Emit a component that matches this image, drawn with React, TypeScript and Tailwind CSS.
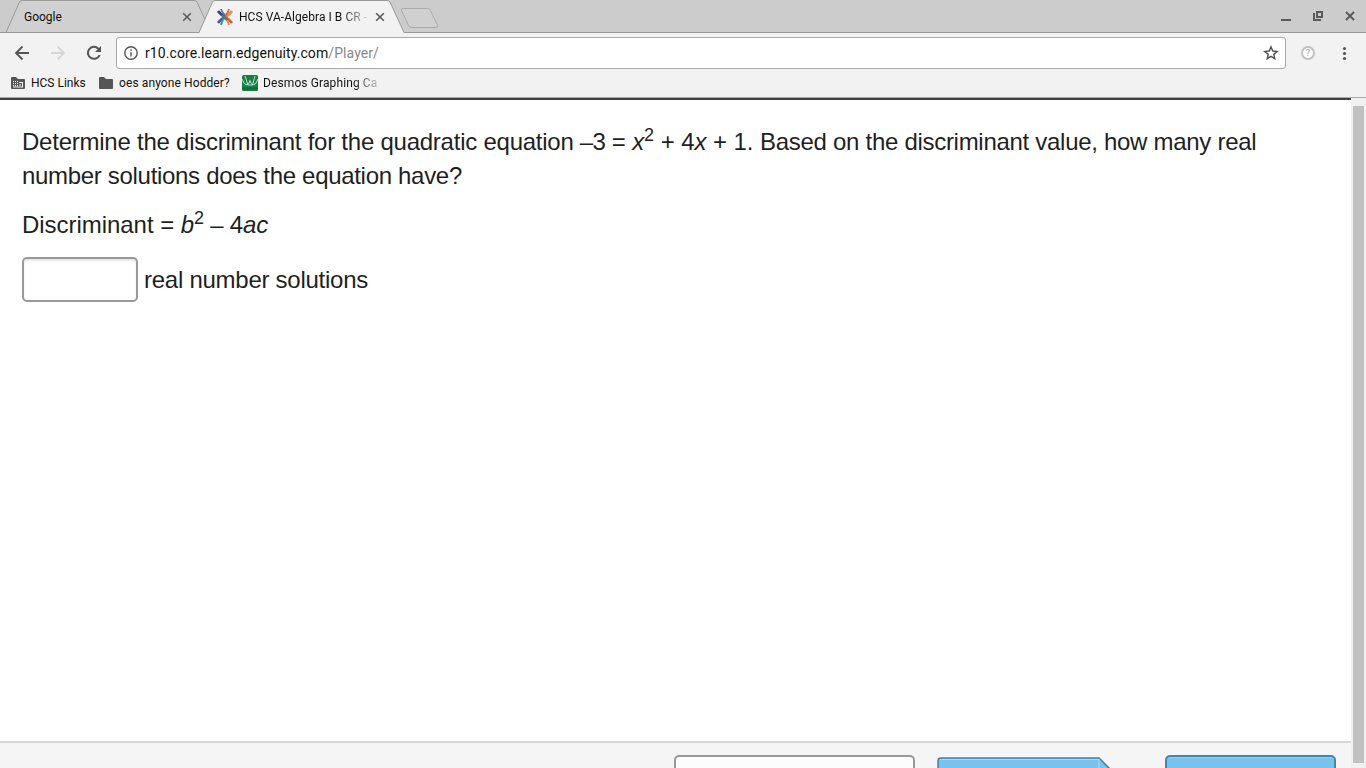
import React from 'react';

const CloseIcon = ({ className }: { className: string }) => (
  <svg className={className} viewBox="0 0 10 10" fill="none" stroke="#5a5a5a" strokeWidth="1.6">
    <path d="M1.200 1.200l7.600 7.600M8.800 1.200L1.200 8.800" />
  </svg>
);

const TabStrip: React.FC = () => (
  <div className="relative flex h-[33px] shrink-0 bg-[#cccccc] text-[12px] text-[#111]">
    {/* tab outlines */}
    <svg className="absolute inset-0 h-[33px] w-[1366px]" viewBox="0 0 1366 33" fill="none">
      <path d="M6 32.500L19.500 2Q20.500 .5 22 .5H194Q196 .5 197 2L211 32.500Z" fill="#d0d0d0" stroke="#999" />
      <path d="M0 32.500H199M404 32.500H1366" stroke="#999" />
      <path d="M199 33L212.500 2Q213.500 .5 215 .5H387Q389 .5 390 2L404 32.500V33Z" fill="#f2f2f2" />
      <path d="M199 32.500L212.500 2Q213.500 .5 215 .5H387Q389 .5 390 2L404 32.500" stroke="#999" />
      <path d="M403 8.500H427.500Q429.500 8.500 430.500 10.500L437.500 25.500Q438 27.500 436 27.500H412Q409.500 27.500 408.500 25.500L401.500 10.500Q401 8.500 403 8.500Z" fill="#d0d0d0" stroke="#aaa" />
    </svg>
    <div className="relative flex h-8 w-[205px] items-center pt-[2px] pl-6">
      <span className="w-[158px]">Google</span>
      <CloseIcon className="h-[10px] w-[10px]" />
    </div>
    <div className="relative flex h-8 w-[196px] items-center pt-[2px] pl-3">
      <svg className="mr-[6px] h-4 w-4" viewBox="0 0 16 16" fill="none" strokeWidth="2.700">
        <path d="M1 2Q4 6 8 7.500" stroke="#35417c" />
        <path d="M4 0Q5 4 8 6" stroke="#4a78ad" strokeWidth="1.800" />
        <path d="M15 2Q12 6 8 8" stroke="#f08a3b" />
        <path d="M12 0Q11 4 8 7" stroke="#e7643a" strokeWidth="1.800" />
        <path d="M8 8Q4 10 1 14" stroke="#48529b" />
        <path d="M8 8Q5 11 4 16" stroke="#2f9d9f" strokeWidth="2" />
        <path d="M8 8Q12 10 15 14" stroke="#df573b" />
        <path d="M8 9Q11 12 12 16" stroke="#f08a3b" strokeWidth="1.800" />
        <path d="M5 6l5 5" stroke="#447a92" strokeWidth="2" />
      </svg>
      <span className="w-[130px] overflow-hidden whitespace-nowrap tracking-[0.050px] [mask-image:linear-gradient(to_right,black_103px,transparent_132px)]">HCS VA-Algebra I B CR -</span>
      <CloseIcon className="ml-[6px] h-[10px] w-[10px] shrink-0" />
    </div>
    <div className="relative ml-auto flex h-8 items-center pr-[11px]">
      <span className="mt-[8px] mr-[22px] h-[2px] w-[10px] bg-[#5a5a5a]" />
      <svg className="mr-[22px] h-[10px] w-[10px]" viewBox="0 0 10 10" fill="none" stroke="#5a5a5a">
        <path d="M4 1h5v5H4z" strokeWidth="2" />
        <path d="M1 2v7h7" strokeWidth="2" />
      </svg>
      <svg className="h-[10px] w-[10px]" viewBox="0 0 10 10" fill="none" stroke="#5a5a5a" strokeWidth="2">
        <path d="M1 1l8 8M9 1L1 9" />
      </svg>
    </div>
  </div>
);

const Toolbar: React.FC = () => (
  <div className="flex h-[41px] shrink-0 items-center pb-px pl-[14px]">
    <svg className="h-4 w-4" viewBox="0 0 16 16" fill="none" stroke="#555" strokeWidth="1.800">
      <path d="M15 8H2.500M8.500 1.500L2 8l6.500 6.500" />
    </svg>
    <svg className="ml-5 h-4 w-4" viewBox="0 0 16 16" fill="none" stroke="#d5d5d5" strokeWidth="1.800">
      <path d="M1 8h12.500M7.500 1.500L14 8l-6.500 6.500" />
    </svg>
    <svg className="ml-5 h-4 w-4" viewBox="0 0 16 16">
      <path d="M13 3A7 7 0 1 0 14.600 10H12.500A5 5 0 1 1 11.600 4.400L9 7h6V1z" fill="#555" />
    </svg>
    <div className="ml-[14px] flex h-8 w-[1170px] items-center rounded-[3px] border border-[#a9a9a9] bg-white pr-[6px] pl-[7px]">
      <svg className="mr-[7px] h-[14px] w-[14px]" viewBox="0 0 14 14" fill="none" stroke="#555" strokeWidth="1.400">
        <circle cx="7" cy="7" r="6.200" />
        <path d="M7 6.200v4.300M7 3.300v1.500" />
      </svg>
      <span className="text-[14px] tracking-[0.080px] text-[#111]">r10.core.learn.edgenuity.com<span className="text-[#888]">/Player/</span></span>
      <svg className="ml-auto h-4 w-4" viewBox="0 0 16 16" fill="none" stroke="#555" strokeWidth="1.500">
        <path d="M8 2l1.750 4.100 4.450.4-3.400 2.900.95 4.300L8 11.400l-3.750 2.300.95-4.300L1.800 6.500l4.450-.4z" />
      </svg>
    </div>
    <span className="ml-[15px] flex h-[14px] w-[14px] items-center justify-center rounded-full border-2 border-[#c1c1c1] bg-white text-[9px] leading-none text-[#999]">?</span>
    <svg className="ml-[27px] h-4 w-4" viewBox="0 0 16 16" fill="#555">
      <circle cx="2.500" cy="3.500" r="1.600" />
      <circle cx="2.500" cy="8.500" r="1.600" />
      <circle cx="2.500" cy="13.500" r="1.600" />
    </svg>
  </div>
);

const Bookmarks: React.FC = () => (
  <div className="flex h-6 shrink-0 items-center border-b border-[#aaa] pb-[5px] pl-[11px] text-[12px] text-[#111]">
    <svg className="mr-[6px] h-3 w-[14px]" viewBox="0 0 14 12">
      <path d="M1 0h4l2 2h6q1 0 1 1v8q0 1-1 1H1q-1 0-1-1V1q0-1 1-1z" fill="#555" />
      <path d="M2 4h1v1H2zM4 4h1v1H4zM6 4h1v1H6zM2 6h1v1H2zM4 6h1v1H4zM6 6h1v1H6zM2 8h1v1H2zM4 8h1v1H4zM6 8h1v1H6zM2 9.500h10v1H2zM8 5h4v1H8zM11 6h1v4h-1zM8 7.500h2v1H8z" fill="#f2f2f2" />
    </svg>
    <span className="w-[55px] whitespace-nowrap">HCS Links</span>
    <svg className="mr-[6px] ml-[13px] h-3 w-[14px]" viewBox="0 0 14 12">
      <path d="M1 0h4l2 2h6q1 0 1 1v8q0 1-1 1H1q-1 0-1-1V1q0-1 1-1z" fill="#555" />
    </svg>
    <span className="w-[111px] whitespace-nowrap tracking-[0.100px]">oes anyone Hodder?</span>
    <svg className="mr-[5px] ml-3 h-4 w-4" viewBox="0 0 16 16" fill="none">
      <rect width="16" height="16" rx="1.500" fill="#168044" />
      <path d="M0 4Q2 10 5 10Q7 9.500 8 5.500Q9 9.500 11 10Q14 10 16 4M3 1L6 10H10.500L13 1" stroke="#d5eadd" strokeWidth=".9" />
      <path d="M0 13.500h16" stroke="#0d6b35" strokeWidth="2" />
    </svg>
    <span className="w-[117px] whitespace-nowrap tracking-[0.110px] [mask-image:linear-gradient(to_right,black_90px,transparent_122px)]">Desmos Graphing Ca</span>
  </div>
);

const Sup = () => <sup className="relative top-[-9px] align-baseline text-[18px] leading-none">2</sup>;

const Question: React.FC = () => (
  <main className="flex-1 pt-[25px] pl-[22px] text-[24px] leading-[34px] text-[#1f1f1f]">
    <p className="whitespace-nowrap">
      <span className="tracking-[-0.240px]">Determine the discriminant for the quadratic equation</span>
      <span className="tracking-[-0.500px]"> –3 </span>
      <span className="tracking-[-0.070px]">= <i>x</i><Sup /> + 4<i>x</i> + 1. </span>
      <span className="tracking-[-0.290px]">Based on the discriminant value, how many real</span>
      <br />
      <span className="tracking-[-0.310px]">number solutions does the equation have?</span>
    </p>
    <p className="mt-[15px] tracking-[-0.200px]"><span className="tracking-[-0.040px]">Discriminant = </span><i>b</i><Sup /> – 4<i>ac</i></p>
    <div className="mt-[15px] flex h-[45px] items-center">
      <input
        aria-label="number of solutions"
        className="mr-[6px] h-[45px] w-[116px] rounded-[5px] border-2 border-[#999] bg-white shadow-[inset_0_2px_2px_#e6e6e6]"
      />
      <span className="tracking-[-0.260px]">real number solutions</span>
    </div>
  </main>
);

const Footer: React.FC = () => (
  <footer className="flex h-[27px] shrink-0 items-start overflow-hidden border-t-2 border-[#d7d7d7] bg-[#f5f5f5] pt-[12px] pl-[674px]">
    <div className="h-10 w-[241px] shrink-0 rounded-[5px] border-2 border-[#999] bg-[#fcfcfc]" />
    <svg className="mt-[2px] ml-[22px] h-[13px] w-[176px] shrink-0" viewBox="0 0 176 13" fill="none">
      <path d="M1 13V4Q1 1 4 1H162L174 13Z" fill="#78c2ed" />
      <path d="M3 2.500H162" stroke="#a8dbf7" />
      <path d="M1 13V4Q1 1 4 1H162L174 13" stroke="#4b7f9f" strokeWidth="1.500" />
      <path d="M162 2V13" stroke="#a8dbf7" />
    </svg>
    <div className="ml-[52px] h-10 w-[171px] shrink-0 rounded-[5px] border-2 border-[#4783ad] bg-[#78c2ed] shadow-[inset_0_1px_0_#8fcff3]" />
  </footer>
);

export default function App() {
  return (
    <div className="flex h-[768px] w-[1366px] flex-col overflow-hidden bg-[#f2f2f2] font-[Roboto,sans-serif]">
      <TabStrip />
      <Toolbar />
      <Bookmarks />
      <div className="flex min-h-0 flex-1">
        <div className="flex w-[1351px] shrink-0 flex-col border-t-2 border-[#444144] bg-white font-['Liberation_Sans',Arial,sans-serif]">
          <Question />
          <Footer />
        </div>
        <div className="w-[15px] bg-[#f1f1f1] pt-2 pl-[2px]">
          <div className="h-[657px] w-[11px] bg-[#c1c1c1]" />
        </div>
      </div>
    </div>
  );
}
